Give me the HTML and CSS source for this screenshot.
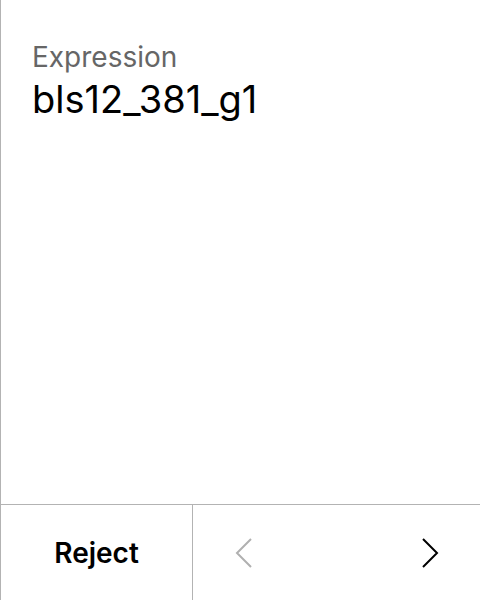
FILE: index.html
```html
<!DOCTYPE html>
<html>
<head>
<meta charset="utf-8">
<link rel="stylesheet" href="styles.css">
</head>
<body>
<div class="panel">
  <div class="content">
    <div class="label">Expression</div>
    <div class="value">bls12_381_g1</div>
  </div>
  <div class="footer">
    <button class="reject">Reject</button>
    <div class="nav">
      <button class="nav-btn disabled" aria-label="Previous">
        <svg width="18" height="32" viewBox="0 0 18 32"><path d="M16 2 L2 16 L16 30" fill="none" stroke="currentColor" stroke-width="2"/></svg>
      </button>
      <button class="nav-btn" aria-label="Next">
        <svg width="18" height="32" viewBox="0 0 18 32"><path d="M2 2 L16 16 L2 30" fill="none" stroke="currentColor" stroke-width="2"/></svg>
      </button>
    </div>
  </div>
</div>
</body>
</html>
```
FILE: styles.css
```css
* { box-sizing: border-box; }
html, body { margin: 0; padding: 0; background: #fff; }
body { font-family: Inter, "Noto Sans", sans-serif; color: #000; }
.panel {
  width: 480px;
  height: 600px;
  border-left: 1px solid #b3b3b3;
  display: flex;
  flex-direction: column;
}
.content {
  flex: 1;
  padding: 40px 0 0 31px;
}
.label {
  font-size: 28px;
  line-height: 34px;
  color: #666;
}
.value {
  font-size: 38px;
  line-height: 44px;
  color: #000;
  margin-top: 3px;
}
.footer {
  height: 96px;
  border-top: 1px solid #b3b3b3;
  display: flex;
}
.reject {
  width: 192px;
  border: none;
  border-right: 1px solid #b3b3b3;
  background: none;
  font-family: inherit;
  font-size: 28px;
  font-weight: 600;
  color: #000;
  padding: 0;
}
.nav {
  flex: 1;
  display: flex;
  justify-content: space-between;
  align-items: center;
  padding: 0 41px 0 42px;
}
.nav-btn {
  border: none;
  background: none;
  padding: 0;
  color: #000;
  display: flex;
}
.nav-btn.disabled { color: #b0b0b0; }
```
